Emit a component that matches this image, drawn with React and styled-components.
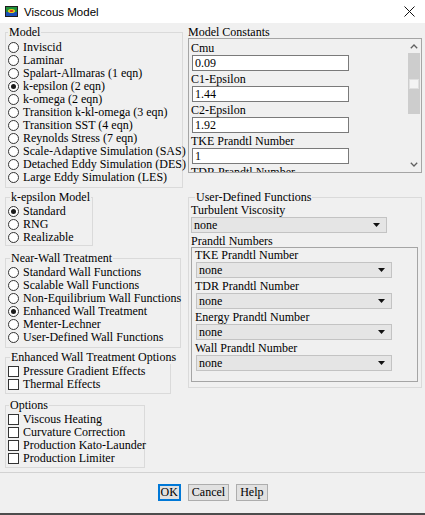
import React from 'react';
import styled, { createGlobalStyle } from 'styled-components';

const GlobalStyle = createGlobalStyle`
  html, body {
    margin: 0;
    padding: 0;
    background: #f0f0f0;
  }
  body {
    font-family: "Liberation Serif", "Times New Roman", serif;
    font-size: 12px;
    color: #000;
  }
`;

const Window = styled.div`
  width: 425px;
  height: 515px;
  display: flex;
  flex-direction: column;
  background: #f0f0f0;
  overflow: hidden;
`;

const TitleBar = styled.div`
  height: 23px;
  flex: none;
  background: #fff;
  display: flex;
  align-items: center;
  padding: 0 10px 0 5px;
  font-family: "Liberation Sans", Arial, sans-serif;
  font-size: 11.5px;
`;

const TitleText = styled.span`
  margin-left: 6px;
  flex: 1;
`;

const Body = styled.div`
  display: flex;
  padding: 3px 3px 0 5px;
  gap: 3px;
`;

const LeftColumn = styled.div`
  width: 180px;
  display: flex;
  flex-direction: column;
  align-items: flex-start;
`;

const RightColumn = styled.div`
  flex: 1;
  display: flex;
  flex-direction: column;
`;

const Group = styled.fieldset`
  box-sizing: border-box;
  width: ${p => p.$w}px;
  min-width: 0;
  margin: ${p => p.$mt || 0}px 0 0 0;
  padding: ${p => p.$pt || 0}px ${p => p.$pr || 0}px ${p => p.$pb || 0}px 2px;
  border: 1px solid #dadada;
`;

const Legend = styled.legend`
  padding: 0 1px;
  margin-left: ${p => p.$ml || 0}px;
  line-height: 13px;
  white-space: nowrap;
`;

const Row = styled.div`
  height: 13px;
  display: flex;
  align-items: center;
  white-space: nowrap;
`;

const Radio = styled.span`
  box-sizing: border-box;
  width: 11px;
  height: 11px;
  flex: none;
  margin-right: 4px;
  border: 1px solid #333;
  border-radius: 50%;
  background: #fff;
  display: inline-flex;
  align-items: center;
  justify-content: center;

  &::after {
    content: '';
    width: 5px;
    height: 5px;
    border-radius: 50%;
    background: #1a1a1a;
    display: ${p => (p.$on ? 'block' : 'none')};
  }
`;

const Check = styled.span`
  box-sizing: border-box;
  width: 11px;
  height: 11px;
  flex: none;
  margin-right: 4px;
  border: 1px solid #333;
  background: #fff;
`;

const PanelLabel = styled.div`
  line-height: ${p => p.$lh || 13}px;
  margin-top: ${p => p.$mt || 0}px;
  white-space: nowrap;
`;

const ConstBox = styled.div`
  height: 135px;
  box-sizing: border-box;
  border: 1px solid #a5a5a5;
  display: flex;
  overflow: hidden;
`;

const ConstList = styled.div`
  flex: 1;
  padding: 3px 0 0 2px;
  overflow: hidden;
`;

const Field = styled.div`
  box-sizing: border-box;
  width: 157px;
  height: 16px;
  margin: 0 0 2px 1px;
  padding-left: 2px;
  border: 1px solid #7a7a7a;
  background: #fff;
  line-height: 14px;
`;

const ScrollBar = styled.div`
  width: 14px;
  flex: none;
  display: flex;
  flex-direction: column;
  align-items: center;
`;

const ScrollArrow = styled.div`
  height: ${p => p.$h}px;
  display: flex;
  align-items: center;
  justify-content: center;
`;

const ScrollTrack = styled.div`
  flex: 1;
  align-self: stretch;
  display: flex;
  justify-content: center;
`;

const Thumb = styled.div`
  width: 12px;
  height: 61px;
  background: #cdcdcd;
  display: flex;
  align-items: center;
  justify-content: center;

  &::after {
    content: '';
    width: 8px;
    height: 8px;
    background: #f4f4f4;
    border: 1px solid #e0e0e0;
  }
`;

const Select = styled.div`
  box-sizing: border-box;
  width: 196px;
  height: 16px;
  margin-left: ${p => p.$ml || 0}px;
  margin-bottom: 2px;
  padding: 0 6px 0 2px;
  background: #e5e5e5;
  border: 1px solid #c3c3c3;
  display: flex;
  align-items: center;
  justify-content: space-between;
  line-height: 14px;
`;

const PrandtlBox = styled.div`
  box-sizing: border-box;
  width: 227px;
  border: 1px solid #a5a5a5;
  padding: 1px 0 8px 3px;
`;

const Footer = styled.div`
  margin-top: 4px;
  border-top: 1px solid #d2d2d2;
  padding-top: 11px;
  display: flex;
  justify-content: center;
  gap: 7px;
`;

const Button = styled.button`
  box-sizing: border-box;
  height: 17px;
  margin: 0;
  padding: 0 ${p => (p.$primary ? 1 : 3)}px;
  font-family: "Liberation Serif", "Times New Roman", serif;
  font-size: 12px;
  line-height: 13px;
  color: #000;
  background: #e1e1e1;
  border: ${p => (p.$primary ? '2px solid #0078d7' : '1px solid #adadad')};
`;

const Spacer = styled.div`
  flex: 1;
`;

const BottomEdge = styled.div`
  height: 2px;
  background: #4d4d4d;
`;

const AppIcon = () => (
  <svg width="13" height="11" viewBox="0 0 13 11">
    <rect x="0" y="0" width="13" height="11" fill="#1d1d1d" />
    <rect x="1" y="1" width="11" height="9" fill="#1f8f3a" />
    <rect x="1" y="6" width="11" height="4" fill="#1b4fb8" />
    <ellipse cx="6.5" cy="5" rx="3.5" ry="2" fill="#e6d21c" />
    <ellipse cx="6.5" cy="5" rx="2" ry="1.1" fill="#d8261c" />
  </svg>
);

const CloseIcon = () => (
  <svg width="11" height="11" viewBox="0 0 11 11">
    <path d="M0.5 0.5 L10.5 10.5 M10.5 0.5 L0.5 10.5" stroke="#111" strokeWidth="1" />
  </svg>
);

const Chevron = ({ up }) => (
  <svg width="8" height="5" viewBox="0 0 8 5">
    <path d={up ? 'M0.8 4.2 L4 1 L7.2 4.2' : 'M0.8 0.8 L4 4 L7.2 0.8'} fill="none" stroke="#606060" strokeWidth="1.3" />
  </svg>
);

const DropArrow = () => (
  <svg width="7" height="4" viewBox="0 0 7 4">
    <path d="M0 0 L7 0 L3.5 4 Z" fill="#111" />
  </svg>
);

const models = [
  'Inviscid',
  'Laminar',
  'Spalart-Allmaras (1 eqn)',
  'k-epsilon (2 eqn)',
  'k-omega (2 eqn)',
  'Transition k-kl-omega (3 eqn)',
  'Transition SST (4 eqn)',
  'Reynolds Stress (7 eqn)',
  'Scale-Adaptive Simulation (SAS)',
  'Detached Eddy Simulation (DES)',
  'Large Eddy Simulation (LES)',
];

const kEpsModels = ['Standard', 'RNG', 'Realizable'];

const wallTreatments = [
  'Standard Wall Functions',
  'Scalable Wall Functions',
  'Non-Equilibrium Wall Functions',
  'Enhanced Wall Treatment',
  'Menter-Lechner',
  'User-Defined Wall Functions',
];

const enhancedOptions = ['Pressure Gradient Effects', 'Thermal Effects'];

const options = ['Viscous Heating', 'Curvature Correction', 'Production Kato-Launder', 'Production Limiter'];

// last entry is scrolled out of view, only its label peeks in
const constants = [
  ['Cmu', '0.09'],
  ['C1-Epsilon', '1.44'],
  ['C2-Epsilon', '1.92'],
  ['TKE Prandtl Number', '1'],
  ['TDR Prandtl Number', null],
];

const prandtl = ['TKE Prandtl Number', 'TDR Prandtl Number', 'Energy Prandtl Number', 'Wall Prandtl Number'];

const RadioList = ({ items, selected }) =>
  items.map(item => (
    <Row key={item}>
      <Radio $on={item === selected} />
      {item}
    </Row>
  ));

const CheckList = ({ items }) =>
  items.map(item => (
    <Row key={item}>
      <Check />
      {item}
    </Row>
  ));

const App = () => {
  return (
    <Window>
      <GlobalStyle />
      <TitleBar>
        <AppIcon />
        <TitleText>Viscous Model</TitleText>
        <CloseIcon />
      </TitleBar>

      <Body>
        <LeftColumn>
          <Group $w={178} $pt={2} $pb={3}>
            <Legend>Model</Legend>
            <RadioList items={models} selected="k-epsilon (2 eqn)" />
          </Group>

          <Group $w={88} $mt={3} $pt={1} $pb={1}>
            <Legend $ml={2}>k-epsilon Model</Legend>
            <RadioList items={kEpsModels} selected="Standard" />
          </Group>

          <Group $w={176} $mt={6} $pt={1} $pb={3}>
            <Legend $ml={2}>Near-Wall Treatment</Legend>
            <RadioList items={wallTreatments} selected="Enhanced Wall Treatment" />
          </Group>

          <Group $w={166} $mt={3} $pt={1} $pb={2}>
            <Legend $ml={2}>Enhanced Wall Treatment Options</Legend>
            <CheckList items={enhancedOptions} />
          </Group>

          <Group $w={140} $mt={5} $pt={1} $pb={2}>
            <Legend $ml={1}>Options</Legend>
            <CheckList items={options} />
          </Group>
        </LeftColumn>

        <RightColumn>
          <PanelLabel $lh={11} $mt={1}>Model Constants</PanelLabel>
          <ConstBox>
            <ConstList>
              {constants.map(([label, value]) => (
                <div key={label}>
                  <PanelLabel>{label}</PanelLabel>
                  {value !== null && <Field>{value}</Field>}
                </div>
              ))}
            </ConstList>
            <ScrollBar>
              <ScrollArrow $h={14}>
                <Chevron up />
              </ScrollArrow>
              <ScrollTrack>
                <Thumb />
              </ScrollTrack>
              <ScrollArrow $h={16}>
                <Chevron />
              </ScrollArrow>
            </ScrollBar>
          </ConstBox>

          <Group $w={234} $mt={18} $pb={5} $pr={3}>
            <Legend $ml={4}>User-Defined Functions</Legend>
            <PanelLabel>Turbulent Viscosity</PanelLabel>
            <Select>
              none
              <DropArrow />
            </Select>
            <PanelLabel $lh={12} $mt={2}>Prandtl Numbers</PanelLabel>
            <PrandtlBox>
              {prandtl.map(label => (
                <div key={label}>
                  <PanelLabel>{label}</PanelLabel>
                  <Select $ml={1}>
                    none
                    <DropArrow />
                  </Select>
                </div>
              ))}
            </PrandtlBox>
          </Group>
        </RightColumn>
      </Body>

      <Footer>
        <Button $primary>OK</Button>
        <Button>Cancel</Button>
        <Button>Help</Button>
      </Footer>
      <Spacer />
      <BottomEdge />
    </Window>
  );
};

export default App;
